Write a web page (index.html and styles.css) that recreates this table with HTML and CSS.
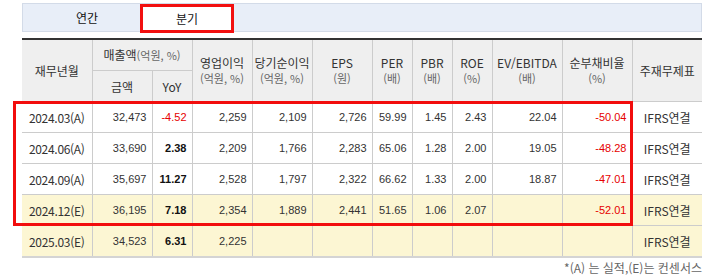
FILE: index.html
```html
<!DOCTYPE html>
<html lang="ko">
<head>
<meta charset="utf-8">
<link rel="stylesheet" href="styles.css">
</head>
<body>
<div class="wrap">
  <div class="tabs">
    <div class="tab">연간</div>
    <div class="tab active">분기</div>
  </div>
  <div class="tbl-wrap">
    <table class="fin">
      <colgroup>
        <col class="w70"><col class="w60"><col class="w40"><col class="w60"><col class="w60"><col class="w60">
        <col class="w40"><col class="w40"><col class="w40"><col class="w70"><col class="w70"><col class="w70">
      </colgroup>
      <thead>
        <tr>
          <th rowspan="2">재무년월</th>
          <th colspan="2" class="h1">매출액<span class="unit">(억원, %)</span></th>
          <th rowspan="2">영업이익<br><span class="unit">(억원, %)</span></th>
          <th rowspan="2">당기순이익<br><span class="unit">(억원, %)</span></th>
          <th rowspan="2">EPS<br><span class="unit">(원)</span></th>
          <th rowspan="2">PER<br><span class="unit">(배)</span></th>
          <th rowspan="2">PBR<br><span class="unit">(배)</span></th>
          <th rowspan="2">ROE<br><span class="unit">(%)</span></th>
          <th rowspan="2">EV/EBITDA<br><span class="unit">(배)</span></th>
          <th rowspan="2">순부채비율<br><span class="unit">(%)</span></th>
          <th rowspan="2">주재무제표</th>
        </tr>
        <tr>
          <th class="h2">금액</th>
          <th class="h2">YoY</th>
        </tr>
      </thead>
      <tbody>
        <tr>
          <td class="date">2024.03(A)</td><td>32,473</td><td class="neg">-4.52</td><td>2,259</td><td>2,109</td><td>2,726</td>
          <td>59.99</td><td>1.45</td><td>2.43</td><td>22.04</td><td class="neg">-50.04</td><td class="std">IFRS연결</td>
        </tr>
        <tr>
          <td class="date">2024.06(A)</td><td>33,690</td><td class="bold">2.38</td><td>2,209</td><td>1,766</td><td>2,283</td>
          <td>65.06</td><td>1.28</td><td>2.00</td><td>19.05</td><td class="neg">-48.28</td><td class="std">IFRS연결</td>
        </tr>
        <tr>
          <td class="date">2024.09(A)</td><td>35,697</td><td class="bold">11.27</td><td>2,528</td><td>1,797</td><td>2,322</td>
          <td>66.62</td><td>1.33</td><td>2.00</td><td>18.87</td><td class="neg">-47.01</td><td class="std">IFRS연결</td>
        </tr>
        <tr class="est">
          <td class="date">2024.12(E)</td><td>36,195</td><td class="bold">7.18</td><td>2,354</td><td>1,889</td><td>2,441</td>
          <td>51.65</td><td>1.06</td><td>2.07</td><td></td><td class="neg">-52.01</td><td class="std">IFRS연결</td>
        </tr>
        <tr class="est">
          <td class="date">2025.03(E)</td><td>34,523</td><td class="bold">6.31</td><td>2,225</td><td></td><td></td>
          <td></td><td></td><td></td><td></td><td></td><td class="std">IFRS연결</td>
        </tr>
      </tbody>
    </table>
    <div class="highlight"></div>
  </div>
  <p class="note">*(A) 는 실적,(E)는 컨센서스</p>
</div>
</body>
</html>
```

FILE: styles.css
```css
html, body {
  margin: 0;
  padding: 0;
  background: #ffffff;
}
body {
  font-family: "Noto Sans CJK KR", "Noto Sans", sans-serif;
  color: #333333;
}
.wrap {
  width: 680px;
  padding: 3px 0 0 22px;
}
.tabs {
  display: flex;
  gap: 6px;
  height: 29px;
  box-sizing: border-box;
  background: #e8eef8;
  border: 1px solid #d3dbe8;
  padding-left: 17px;
}
.tab {
  width: 94px;
  height: 29px;
  box-sizing: border-box;
  display: flex;
  align-items: center;
  justify-content: center;
  font-size: 12px;
  color: #111111;
  margin-top: -1px;
}
.tab.active {
  background: #ffffff;
  border: 3px solid #f21010;
  margin-top: 0;
}
.tbl-wrap {
  position: relative;
  margin-top: 6px;
}
.fin {
  width: 680px;
  table-layout: fixed;
  border-collapse: collapse;
  border-top: 2px solid #333333;
  border-bottom: 2px solid #d4d4d4;
}
.w70 { width: 70px; }
.w60 { width: 60px; }
.w40 { width: 40px; }
.fin th {
  background: #efefef;
  font-weight: normal;
  font-size: 12px;
  line-height: 15px;
  color: #333333;
  border: 1px solid #cccccc;
  padding: 0;
  text-align: center;
  vertical-align: middle;
  height: 30px;
  white-space: nowrap;
}
.fin th .unit {
  font-size: 11px;
  color: #666666;
}
.fin td {
  height: 30px;
  padding: 0 5px 0 0;
  border: 1px solid #cccccc;
  text-align: right;
  vertical-align: middle;
  font-family: "Liberation Sans", Arial, sans-serif;
  font-size: 11px;
  color: #333333;
  white-space: nowrap;
}
.fin tr > :first-child { border-left: none; }
.fin tr > :last-child { border-right: none; }
.fin thead tr:nth-child(2) > :last-child { border-right: 1px solid #cccccc; }
.fin td.date {
  text-align: center;
  padding: 0;
  font-family: "Noto Sans CJK KR", sans-serif;
  font-size: 12px;
  letter-spacing: -0.3px;
}
.fin td.std {
  text-align: center;
  padding: 0;
  font-family: "Noto Sans CJK KR", sans-serif;
  font-size: 12px;
}
.fin td.neg { color: #e60000; }
.fin td.bold { font-weight: bold; color: #111111; }
.fin tr.est td { background: #fcf6d3; }
.highlight {
  position: absolute;
  left: -9px;
  top: 63px;
  width: 620px;
  height: 125px;
  box-sizing: border-box;
  border: 3px solid #f20d0d;
  pointer-events: none;
}
.note {
  margin: 2px 0 0;
  text-align: right;
  font-size: 12px;
  line-height: 16px;
  color: #666666;
}
```
